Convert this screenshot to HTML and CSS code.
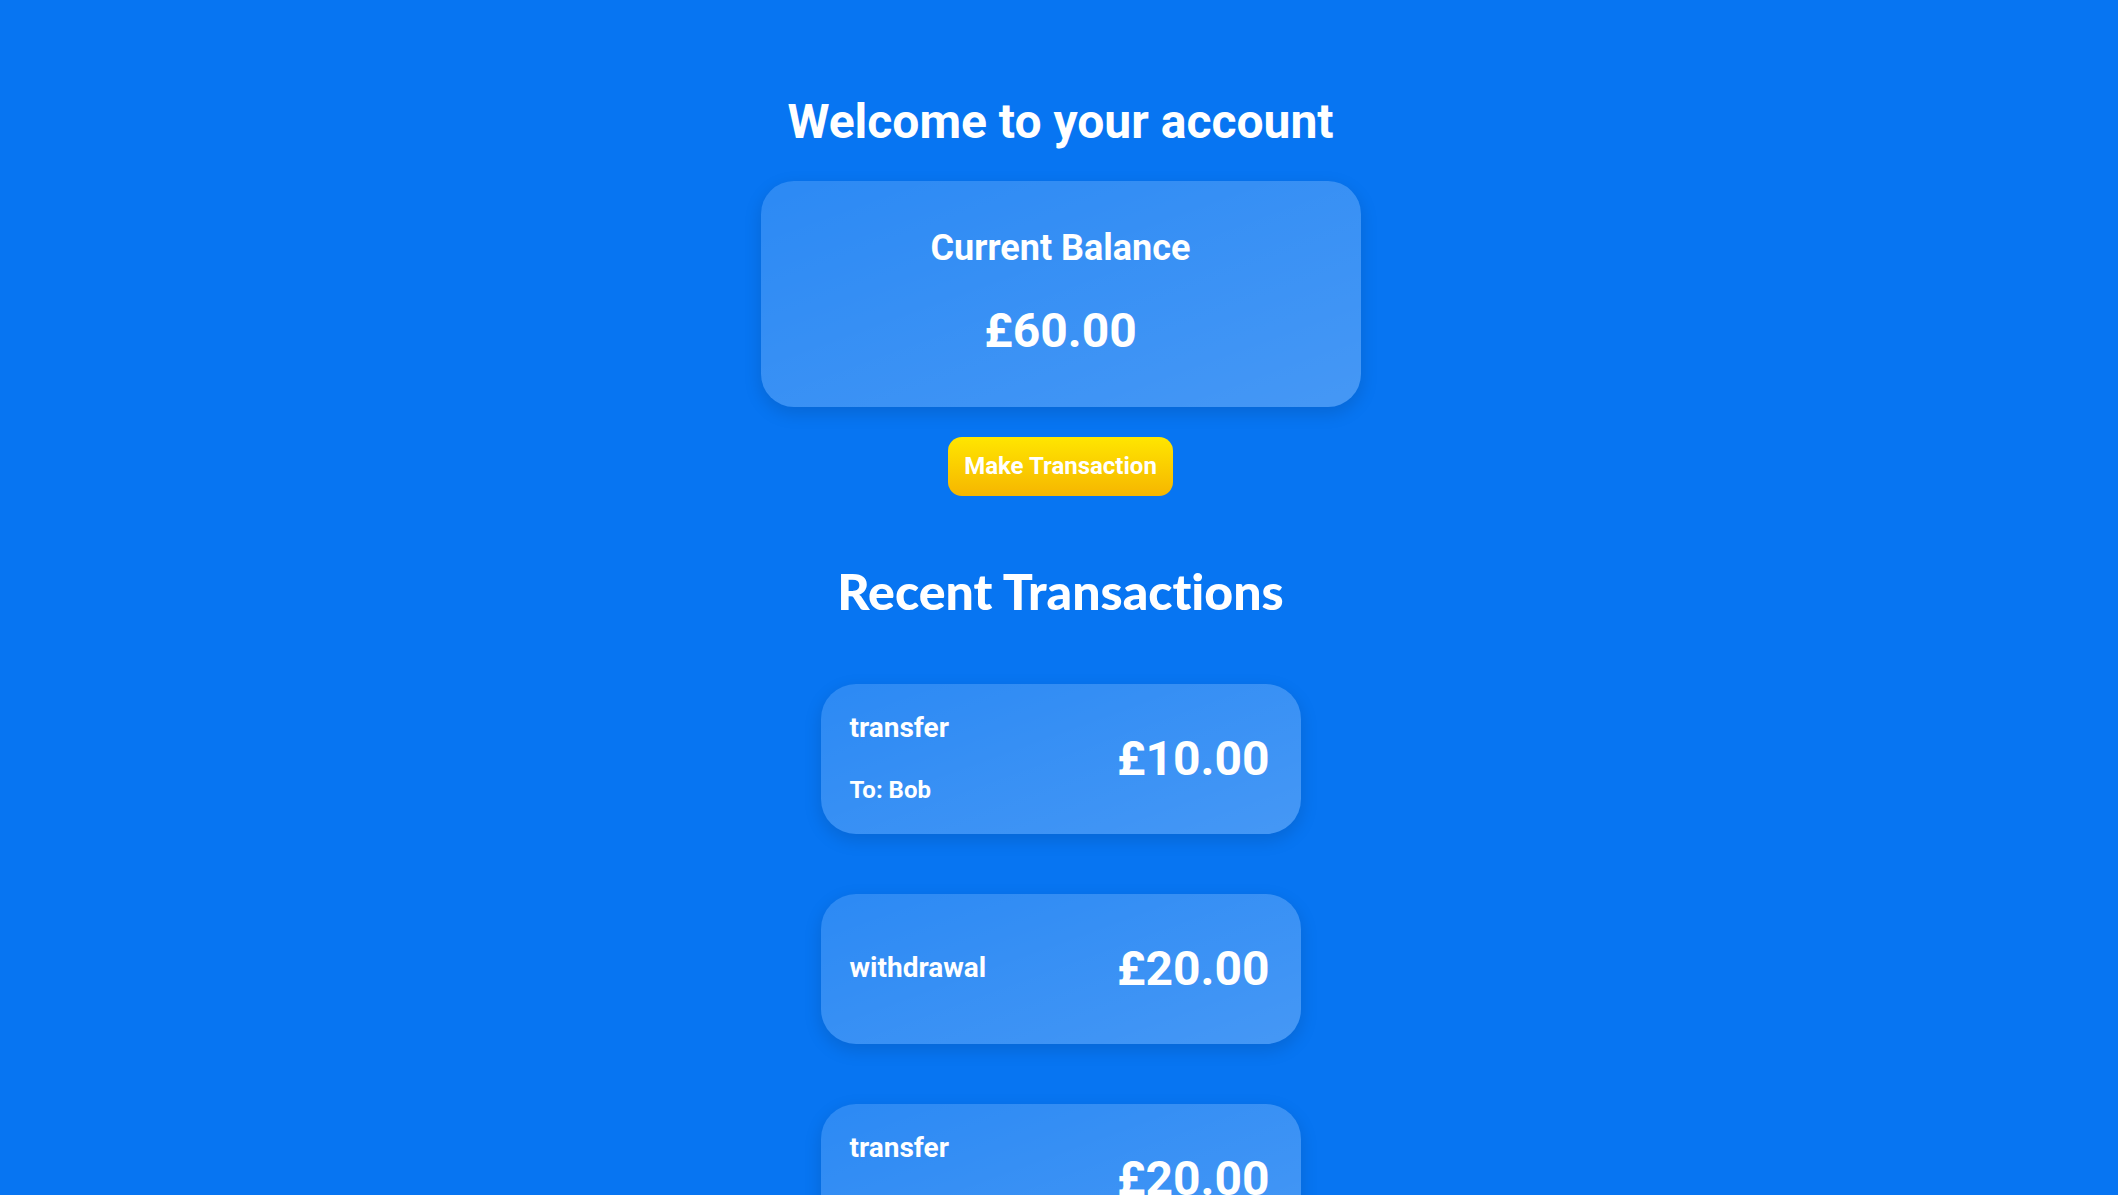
FILE: index.html
```html
<!DOCTYPE html>
<html lang="en">
<head>
<meta charset="utf-8">
<title>Account</title>
<link rel="stylesheet" href="styles.css">
</head>
<body>
<main class="page">
  <h1 class="title">Welcome to your account</h1>
  <section class="balance-card">
    <h2 class="balance-label">Current Balance</h2>
    <p class="balance-amount">£60.00</p>
  </section>
  <button class="action-btn" type="button">Make Transaction</button>
  <h2 class="section-title">Recent Transactions</h2>
  <ul class="tx-list">
    <li class="tx-card">
      <div class="tx-info">
        <h3 class="tx-type tx-type-spaced">transfer</h3>
        <p class="tx-meta">To: Bob</p>
      </div>
      <span class="tx-amount">£10.00</span>
    </li>
    <li class="tx-card">
      <div class="tx-info">
        <h3 class="tx-type">withdrawal</h3>
      </div>
      <span class="tx-amount">£20.00</span>
    </li>
    <li class="tx-card">
      <div class="tx-info">
        <h3 class="tx-type tx-type-spaced">transfer</h3>
        <p class="tx-meta">To: Alice</p>
      </div>
      <span class="tx-amount">£20.00</span>
    </li>
  </ul>
</main>
</body>
</html>
```
FILE: styles.css
```css
* { box-sizing: border-box; }

html, body {
  margin: 0;
  padding: 0;
  background: #0775f2;
}

body {
  font-family: Roboto, "Liberation Sans", Arial, sans-serif;
  color: #ffffff;
}

.page {
  display: flex;
  flex-direction: column;
  align-items: center;
  padding: 94px 0 80px 3px;
}

.title {
  margin: 0;
  font-size: 48px;
  line-height: 56px;
  font-weight: 700;
}

.balance-card {
  margin-top: 31px;
  width: 600px;
  height: 226px;
  padding: 46px 40px 0;
  border-radius: 33px;
  background: linear-gradient(160deg, rgba(255,255,255,0.15), rgba(255,255,255,0.25));
  box-shadow: 0 6px 18px rgba(0, 0, 0, 0.13);
  display: flex;
  flex-direction: column;
  align-items: center;
}

.balance-label {
  margin: 0;
  font-size: 36px;
  line-height: 42px;
  font-weight: 700;
}

.balance-amount {
  margin: 34px 0 0;
  font-size: 48px;
  line-height: 56px;
  font-weight: 700;
}

.action-btn {
  margin-top: 30px;
  border: 0;
  padding: 15px 16px;
  border-radius: 14px;
  background: linear-gradient(180deg, #ffe600 0%, #f6b600 100%);
  color: #ffffff;
  font-family: Roboto, "Liberation Sans", Arial, sans-serif;
  font-size: 24px;
  line-height: 29px;
  font-weight: 700;
  cursor: pointer;
}

.section-title {
  margin: 65px 0 0;
  font-family: Lato, "Open Sans", sans-serif;
  font-size: 50px;
  line-height: 60px;
  font-weight: 900;
  font-variant-ligatures: none;
}

.tx-list {
  list-style: none;
  margin: 63px 0 0;
  padding: 0;
  display: flex;
  flex-direction: column;
  gap: 60px;
}

.tx-card {
  width: 480px;
  height: 150px;
  padding: 0 31px 0 29px;
  border-radius: 35px;
  background: linear-gradient(160deg, rgba(255,255,255,0.15), rgba(255,255,255,0.25));
  box-shadow: 0 6px 18px rgba(0, 0, 0, 0.13);
  display: flex;
  align-items: center;
  justify-content: space-between;
}

.tx-info {
  display: flex;
  flex-direction: column;
  padding-bottom: 3px;
}

.tx-type {
  margin: 0;
  font-size: 28px;
  line-height: 33px;
  font-weight: 700;
}

.tx-type-spaced {
  margin-bottom: 32px;
}

.tx-meta {
  margin: 0;
  font-size: 24px;
  line-height: 28px;
  font-weight: 700;
}

.tx-amount {
  font-size: 48px;
  line-height: 56px;
  font-weight: 700;
}
```
